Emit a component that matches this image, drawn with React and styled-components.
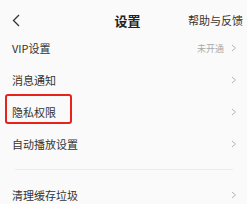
import React from "react";
import styled, { createGlobalStyle } from "styled-components";

const GlobalStyle = createGlobalStyle`
    html, body {
        margin: 0;
        padding: 0;
        background: #fafafa;
    }
    body {
        font-family: "Noto Sans CJK SC", "Noto Sans", sans-serif;
        color: #333;
    }
`;

const Page = styled.div`
    width: 247px;
    height: 204px;
    overflow: hidden;
    background: #fafafa;
`;

const Header = styled.div`
    height: 24px;
    display: grid;
    grid-template-columns: 1fr auto 1fr;
    align-items: center;
    padding: 8px 4px 0 12px;
`;

const BackButton = styled.div`
    display: flex;
    align-items: center;
`;

const Title = styled.div`
    font-size: 13px;
    font-weight: 700;
    color: #222;
`;

const HeaderLink = styled.div`
    justify-self: end;
    font-size: 11px;
    color: #333;
`;

const Row = styled.div`
    position: relative;
    height: 32px;
    display: flex;
    align-items: center;
    justify-content: space-between;
    padding: 0 10px 0 12px;
    font-size: 11px;
    margin-top: ${(p) => p.$top || 0}px;

    ${(p) =>
        p.$marked &&
        `
        &::before {
            content: "";
            position: absolute;
            left: 5px;
            top: -2px;
            width: 63px;
            height: 26px;
            border: 2px solid #e8231c;
            border-radius: 3px;
        }
    `}
`;

const Right = styled.div`
    display: flex;
    align-items: center;
    gap: 7px;
    font-size: 9px;
    color: #aaa;
`;

const Divider = styled.div`
    height: 1px;
    margin: 9px 14px 0 15px;
    background: #ececec;
`;

const Chevron = () => (
    <svg width="6" height="8" viewBox="0 0 6 8">
        <polyline points="1,1 4.5,4 1,7" fill="none" stroke="#b5b5b5" strokeWidth="1" />
    </svg>
);

const rows = [
    { label: "VIP设置", value: "未开通" },
    { label: "消息通知" },
    { label: "隐私权限", marked: true },
    { label: "自动播放设置" },
];

export default function App() {
    return (
        <Page>
            <GlobalStyle />
            <Header>
                <BackButton>
                    <svg width="9" height="13" viewBox="0 0 9 13">
                        <polyline points="7,1 1.5,6.5 7,12" fill="none" stroke="#333" strokeWidth="1.3" />
                    </svg>
                </BackButton>
                <Title>设置</Title>
                <HeaderLink>帮助与反馈</HeaderLink>
            </Header>
            {rows.map((r) => (
                <Row key={r.label} $marked={r.marked}>
                    <span>{r.label}</span>
                    <Right>
                        {r.value && <span>{r.value}</span>}
                        <Chevron />
                    </Right>
                </Row>
            ))}
            <Divider />
            <Row $top={9}>
                <span>清理缓存垃圾</span>
                <Right>
                    <Chevron />
                </Right>
            </Row>
        </Page>
    );
}
